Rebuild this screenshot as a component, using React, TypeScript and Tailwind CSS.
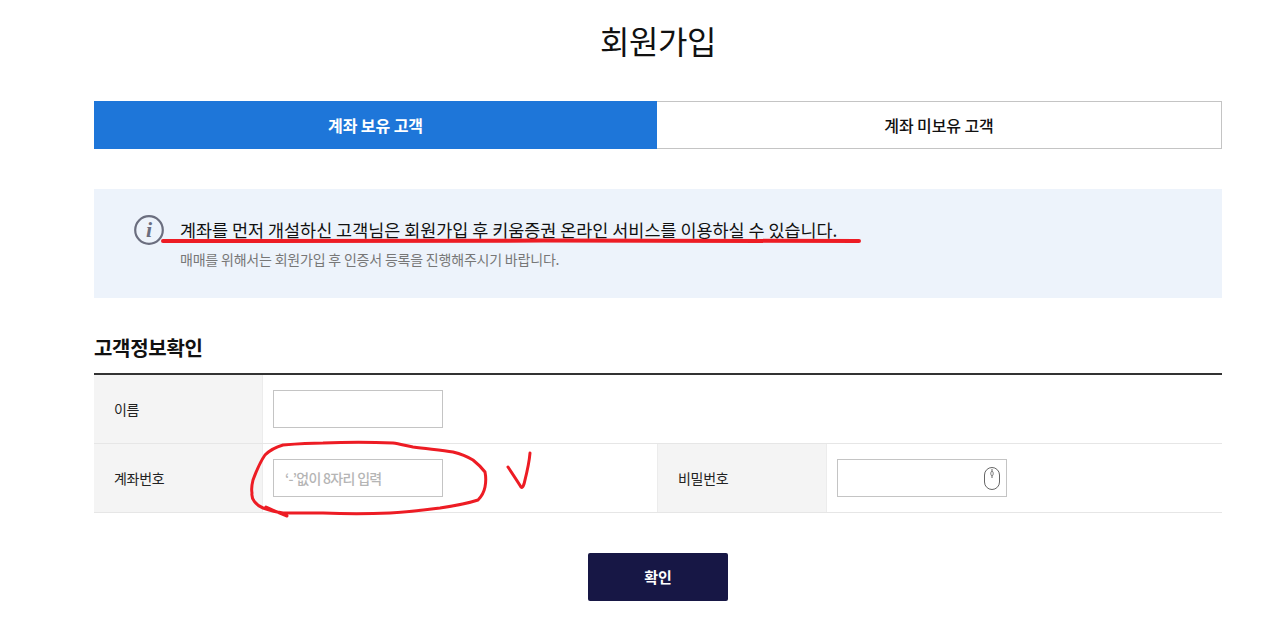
const KR = 'font-["Noto_Sans_CJK_KR",sans-serif]';

function InfoIcon() {
  return (
    <svg width="30" height="30" viewBox="0 0 30 30" className="shrink-0">
      <circle cx="15" cy="15" r="13.8" fill="none" stroke="#6b6e7f" strokeWidth="2.2" />
      <text x="15" y="22" textAnchor="middle" fontFamily="'Liberation Serif', serif" fontStyle="italic" fontWeight="700" fontSize="22" fill="#6b6e7f">
        i
      </text>
    </svg>
  );
}

function MouseIcon() {
  return (
    <svg width="16" height="23" viewBox="0 0 16 23" className="absolute right-[6px] top-[7px]">
      <rect x="0.5" y="0.5" width="15" height="22" rx="7.5" fill="#fff" stroke="#666" />
      <path d="M8 2v9" stroke="#666" />
      <rect x="6.8" y="4.5" width="2.4" height="4" rx="1.2" fill="#fff" stroke="#666" strokeWidth="0.8" />
    </svg>
  );
}

export default function App() {
  return (
    <div className={`${KR} relative h-[643px] w-[1274px] overflow-hidden bg-white text-[#111]`}>
      <div className="ml-[94px] w-[1128px]">
        <h1 className="h-[101px] pt-[14px] text-center text-[32px] leading-[52px] font-normal tracking-[-0.5px]">회원가입</h1>

        <div className="flex h-12">
          <button className="w-[563px] bg-[#1e76d9] text-[16px] font-bold tracking-[-0.1px] text-white">계좌 보유 고객</button>
          <button className="flex-1 border border-[#c4c4c4] border-l-0 bg-white text-[16px] font-medium tracking-[-0.1px] text-[#111]">계좌 미보유 고객</button>
        </div>

        <div className="mt-10 flex h-[109px] items-start gap-4 bg-[#edf3fb] pt-[26px] pl-[40px]">
          <InfoIcon />
          <div className="pt-[2px]">
            <p className="text-[17.45px] leading-[26px] text-[#111]">계좌를 먼저 개설하신 고객님은 회원가입 후 키움증권 온라인 서비스를 이용하실 수 있습니다.</p>
            <p className="mt-[6px] text-[14px] leading-[20px] tracking-[-0.2px] text-[#777]">매매를 위해서는 회원가입 후 인증서 등록을 진행해주시기 바랍니다.</p>
          </div>
        </div>

        <h2 className="mt-[35px] h-[40px] text-[20px] leading-[30px] font-bold tracking-[-0.3px]">고객정보확인</h2>

        <div className="border-t-2 border-[#333] text-[14px] tracking-[-0.3px] text-[#222]">
          <div className="flex h-[69px] border-b border-[#e6e6e6]">
            <div className="flex w-[169px] items-center border-r border-[#ececec] bg-[#f4f4f4] pl-5">이름</div>
            <div className="flex items-center pl-[10px]">
              <div className="h-[38px] w-[170px] border border-[#c4c4c4] bg-white" />
            </div>
          </div>
          <div className="flex h-[69px] border-b border-[#e6e6e6]">
            <div className="flex w-[169px] items-center border-r border-[#ececec] bg-[#f4f4f4] pl-5">계좌번호</div>
            <div className="flex w-[394px] items-center pl-[10px]">
              <div className="flex h-[38px] w-[170px] items-center border border-[#c4c4c4] bg-white pl-[11px] text-[14px] font-medium tracking-[-0.7px] text-[#b5b5b5]">‘-’없이 8자리 입력</div>
            </div>
            <div className="flex w-[170px] items-center border-x border-[#ececec] bg-[#f4f4f4] pl-5">비밀번호</div>
            <div className="flex items-center pl-[10px]">
              <div className="relative h-[38px] w-[170px] border border-[#c4c4c4] bg-white">
                <MouseIcon />
              </div>
            </div>
          </div>
        </div>

        <div className="mt-10 flex justify-center">
          <button className="h-12 w-[140px] rounded-[2px] bg-[#171745] text-[15px] font-bold text-white">확인</button>
        </div>
      </div>

      {/* hand drawn marks on top of the screenshot */}
      <svg width="1274" height="643" className="pointer-events-none absolute top-0 left-0" fill="none" stroke="#ed1c24" strokeLinecap="round" strokeLinejoin="round">
        <path d="M163 241 C 350 241 650 240 859 241" strokeWidth="4" />
        <path
          d="M287 516 C 280 513 272 510 266 507 M263 508 C 256 505 251 499 252 493 C 251 488 252 484 253 480 C 256 472 260 462 265 455 C 270 450 276 447 283 445 C 295 444 310 443 323 443 C 345 442 372 442 393 443 C 400 444 407 446 413 447 C 427 449 441 450 453 452 C 461 454 468 457 473 460 C 478 464 482 468 485 472 C 486 477 486 482 485 487 C 484 492 481 497 478 500 C 466 504 453 506 440 508 C 424 510 407 512 390 513 C 368 514 345 514 323 513 C 309 513 296 513 283 513 C 276 512 269 510 263 508"
          strokeWidth="3"
        />
        <path d="M508 467 C 512 473 518 482 521 487 C 522 488 523 487 524 484 C 526 476 529 465 530 453" strokeWidth="3" />
      </svg>
    </div>
  );
}
